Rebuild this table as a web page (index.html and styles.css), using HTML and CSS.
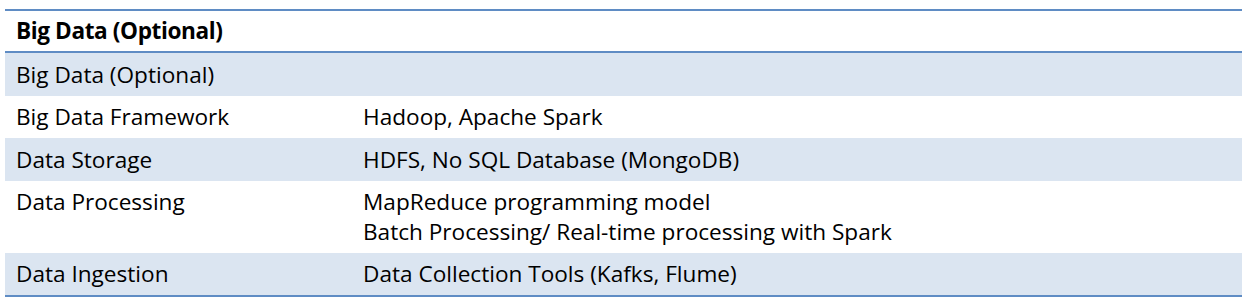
FILE: index.html
```html
<!DOCTYPE html>
<html>
<head>
<meta charset="utf-8">
<link rel="stylesheet" href="styles.css">
</head>
<body>
<table class="spec">
  <thead>
    <tr class="head">
      <th colspan="2">Big Data (Optional)</th>
    </tr>
  </thead>
  <tbody>
    <tr class="band">
      <td class="c1">Big Data (Optional)</td>
      <td class="c2"></td>
    </tr>
    <tr>
      <td class="c1">Big Data Framework</td>
      <td class="c2">Hadoop, Apache Spark</td>
    </tr>
    <tr class="band">
      <td class="c1">Data Storage</td>
      <td class="c2">HDFS, No SQL Database (MongoDB)</td>
    </tr>
    <tr>
      <td class="c1">Data Processing</td>
      <td class="c2">MapReduce programming model<br>Batch Processing/ Real-time processing with Spark</td>
    </tr>
    <tr class="band last">
      <td class="c1">Data Ingestion</td>
      <td class="c2">Data Collection Tools (Kafks, Flume)</td>
    </tr>
  </tbody>
</table>
</body>
</html>
```
FILE: styles.css
```css
html, body {
  margin: 0;
  padding: 0;
  background: #ffffff;
}
body {
  padding: 9px 6px 0 5px;
  font-family: "Open Sans", "Noto Sans", sans-serif;
  font-size: 22.6px;
  color: #000000;
}
.spec {
  width: 1237px;
  border-collapse: collapse;
  border-top: 2px solid #5f8cc4;
  border-bottom: 2px solid #5f8cc4;
}
.spec th,
.spec td {
  padding: 6.5px 11px 6.5px 11px;
  line-height: 29.5px;
  text-align: left;
  vertical-align: top;
  white-space: nowrap;
}
.head th {
  font-weight: 700;
  letter-spacing: -0.4px;
  line-height: 29px;
  height: 27px;
  padding-top: 5px;
  padding-bottom: 6px;
  border-bottom: 2px solid #5f8cc4;
}
.band td {
  background: #dbe5f1;
}
.c1 {
  width: 325px;
}
```
